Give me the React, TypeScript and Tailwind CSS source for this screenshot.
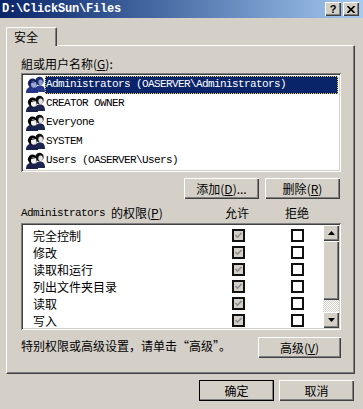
import React from "react";

const cjk = "font-['Noto_Sans_CJK_SC',sans-serif]";
const mono = "font-['Liberation_Mono','Noto_Sans_CJK_SC',monospace] text-[11px] tracking-[-0.6px]";
const raised =
  "bg-[#d4d0c8] shadow-[inset_1px_1px_0_#fff,inset_-1px_-1px_0_#404040,inset_-2px_-2px_0_#808080]";
const sunken =
  "bg-white shadow-[inset_1px_1px_0_#808080,inset_-1px_-1px_0_#fff,inset_2px_2px_0_#404040,inset_-2px_-2px_0_#d4d0c8]";

const USERS = [
  "Administrators (OASERVER\\Administrators)",
  "CREATOR OWNER",
  "Everyone",
  "SYSTEM",
  "Users (OASERVER\\Users)",
];

const PERMS = ["完全控制", "修改", "读取和运行", "列出文件夹目录", "读取", "写入"];

const Key: React.FC<{ k: string }> = ({ k }) => (
  <span>
    (<span className="underline">{k}</span>)
  </span>
);

const UsersIcon: React.FC<{ sel?: boolean }> = ({ sel }) => (
  <svg width="19" height="17" viewBox="0 0 19 17">
    <path d="M8.5 16 C8.5 11.5 10.5 9.5 14 9.5 C17.5 9.5 19 11.5 19 16 Z" fill={sel ? "#2a3a8a" : "#1c2450"} />
    <circle cx="13.5" cy="5" r="4.2" fill={sel ? "#1a2a6a" : "#111"} />
    <ellipse cx="14.6" cy="6.2" rx="2.2" ry="2.8" fill={sel ? "#8c9ad0" : "#e4e4e4"} />
    <path d="M0 17 C0 12.5 2.5 10.8 6.2 10.8 C9.8 10.8 12 12.5 12 17 Z" fill={sel ? "#24348a" : "#18204c"} />
    <circle cx="6.5" cy="7.2" r="4.6" fill={sel ? "#142060" : "#000"} />
    <ellipse cx="7.7" cy="8.4" rx="2.7" ry="3.3" fill={sel ? "#9aa6d8" : "#f2f2f2"} />
    <path d="M5 6.5 L10 5.5" stroke={sel ? "#142060" : "#000"} strokeWidth="1.2" />
  </svg>
);

const Btn: React.FC<{ className?: string; children: React.ReactNode; def?: boolean }> = ({
  className = "w-[75px]",
  children,
  def,
}) => (
  <div
    className={`${raised} ${def ? "outline outline-1 outline-black -outline-offset-1" : ""} h-[21px] flex items-center justify-center text-[12px] leading-[12px] ${cjk} ${className}`}
  >
    {children}
  </div>
);

const Check: React.FC<{ on?: boolean }> = ({ on }) => (
  <div
    className={`w-[13px] h-[13px] border-2 border-[#111] flex items-center justify-center ${on ? "bg-[#d4d0c8]" : "bg-white"}`}
  >
    {on && (
      <svg width="9" height="9" viewBox="0 0 9 9">
        <path d="M1.5 4 L3.5 6.2 L7.5 2" stroke="#8a8a8a" strokeWidth="1.6" fill="none" />
      </svg>
    )}
  </div>
);

const Arrow: React.FC<{ up?: boolean }> = ({ up }) => (
  <svg width="7" height="4" viewBox="0 0 7 4">
    <path d={up ? "M3.5 0 L7 4 L0 4 Z" : "M0 0 L7 0 L3.5 4 Z"} fill="#000" />
  </svg>
);

export default function App() {
  return (
    <div className="w-[363px] h-[409px] bg-[#d4d0c8] flex flex-col overflow-hidden text-black">
      {/* Title bar */}
      <div className="h-[18px] flex items-center justify-between pl-[2px] pr-[4px] bg-linear-to-r from-[#0a246a] to-[#a6caf0]">
        <span className="font-['Liberation_Mono',monospace] font-bold text-[12px] tracking-[-0.2px] text-white leading-[12px]">
          D:\ClickSun\Files
        </span>
        <div className="flex gap-[2px]">
          <div className={`${raised} w-[16px] h-[14px] flex items-center justify-center`}>
            <span className="font-['Liberation_Sans',sans-serif] font-bold text-[11px] leading-[11px]">?</span>
          </div>
          <div className={`${raised} w-[16px] h-[14px] flex items-center justify-center`}>
            <svg width="8" height="7" viewBox="0 0 8 7">
              <path d="M0.5 0 L7.5 7 M7.5 0 L0.5 7" stroke="#000" strokeWidth="1.6" />
            </svg>
          </div>
        </div>
      </div>

      {/* Tab strip */}
      <div className="mt-[9px] ml-[6px] relative z-10 -mb-[1px]">
        <div className="w-[51px] h-[19px] bg-[#d4d0c8] border-t border-l border-white rounded-tl-[2px] rounded-tr-[2px] shadow-[inset_-1px_0_0_#808080] border-r border-r-[#404040] flex items-center pl-[7px]">
          <span className={`${cjk} text-[12px] leading-[12px]`}>安全</span>
        </div>
      </div>

      {/* Panel */}
      <div className="ml-[6px] w-[349px] h-[329px] border-t border-l border-white border-r border-b border-r-[#404040] border-b-[#404040] shadow-[inset_-1px_-1px_0_#808080] pl-[14px] pr-[13px] flex flex-col">
        <div className={`${cjk} mt-[12px] text-[12px] leading-[12px]`}>
          組或用户名称<Key k="G" />:
        </div>

        <div className={`${sunken} mt-[3px] w-[320px] h-[99px] pt-[2px] px-[2px]`}>
          {USERS.map((u, i) => (
            <div key={u} className="h-[19px] flex items-center pl-[3px] pr-[1px]">
              <UsersIcon sel={i === 0} />
              <div
                className={`flex-1 h-[18px] flex items-center pl-[1px] ${mono} ${
                  i === 0 ? "bg-[#0a246a] text-white outline-1 outline-dotted outline-[#e0c060] -outline-offset-1" : ""
                }`}
              >
                {u}
              </div>
            </div>
          ))}
        </div>

        <div className="mt-[6px] w-[320px] flex justify-end gap-[6px] pr-[1px]">
          <Btn>
            添加<Key k="D" />...
          </Btn>
          <Btn>
            删除<Key k="R" />
          </Btn>
        </div>

        <div className="mt-[8px] h-[12px] flex items-center">
          <div className="w-[204px] flex items-center gap-[6px]">
            <span className={mono}>Administrators</span>
            <span className={`${cjk} text-[12px] leading-[12px]`}>
              的权限<Key k="P" />
            </span>
          </div>
          <span className={`${cjk} text-[12px] leading-[12px] w-[24px]`}>允许</span>
          <span className={`${cjk} text-[12px] leading-[12px] ml-[36px]`}>拒绝</span>
        </div>

        <div className={`${sunken} mt-[4px] w-[320px] h-[107px] p-[2px] flex`}>
          <div className="flex-1 pt-[2px]">
            {PERMS.map((p) => (
              <div key={p} className="h-[17px] flex items-center pl-[10px]">
                <span className={`${cjk} w-[199px] text-[12px] leading-[12px]`}>{p}</span>
                <Check on />
                <div className="w-[46px]" />
                <Check />
              </div>
            ))}
          </div>
          <div className="w-[16px] flex flex-col">
            <div className={`${raised} h-[16px] flex items-center justify-center`}>
              <Arrow up />
            </div>
            <div className={`${raised} h-[59px]`} />
            <div className="h-[12px] bg-[repeating-conic-gradient(#d4d0c8_0%_25%,#fff_0%_50%)] bg-size-[2px_2px]" />
            <div className={`${raised} h-[16px] flex items-center justify-center`}>
              <Arrow />
            </div>
          </div>
        </div>

        <div className="mt-[7px] w-[320px] flex items-center justify-between">
          <span className={`${cjk} text-[12px] leading-[12px] -mt-[3px]`}>
            特别权限或高级设置，请单击“高级”。
          </span>
          <Btn className="w-[83px]">
            高级<Key k="V" />
          </Btn>
        </div>
      </div>

      {/* Bottom buttons */}
      <div className="mt-[6px] flex justify-end gap-[5px] pr-[9px]">
        <Btn def>确定</Btn>
        <Btn>取消</Btn>
      </div>
    </div>
  );
}
